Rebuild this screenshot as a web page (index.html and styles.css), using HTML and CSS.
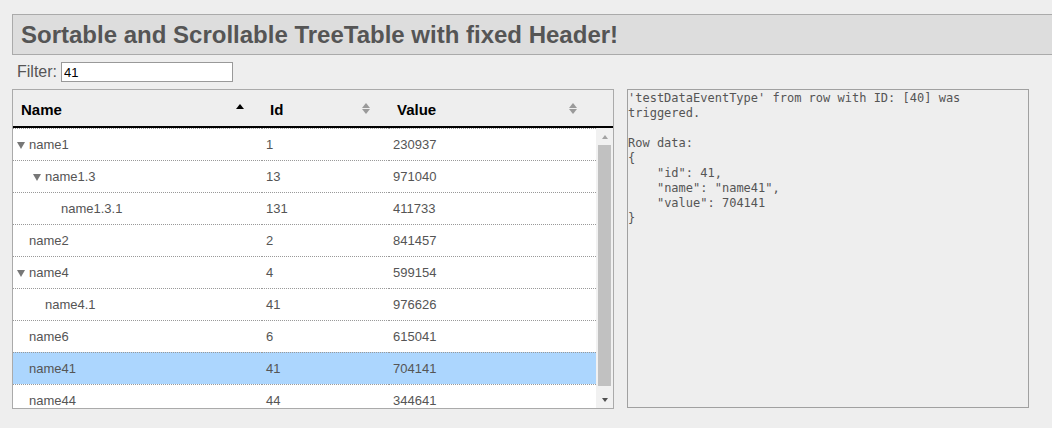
FILE: index.html
```html
<!DOCTYPE html>
<html>
<head>
<meta charset="utf-8">
<link rel="stylesheet" href="styles.css">
</head>
<body>
<div class="page">
  <h1 class="title">Sortable and Scrollable TreeTable with fixed Header!</h1>
  <div class="filter">
    <label class="filter-label" for="f">Filter:</label>
    <input id="f" class="filter-input" type="text" value="41">
  </div>
  <div class="main">
    <div class="tree-table">
      <div class="thead">
        <div class="th"><span>Name</span><span class="sort sort-asc"></span></div>
        <div class="th"><span>Id</span><span class="sort sort-both"></span></div>
        <div class="th"><span>Value</span><span class="sort sort-both"></span></div>
      </div>
      <div class="tbody">
        <div class="rows">
          <div class="tr"><div class="td name lvl0"><span class="tog open"></span>name1</div><div class="td">1</div><div class="td">230937</div></div>
          <div class="tr"><div class="td name lvl1"><span class="tog open"></span>name1.3</div><div class="td">13</div><div class="td">971040</div></div>
          <div class="tr"><div class="td name lvl2"><span class="tog"></span>name1.3.1</div><div class="td">131</div><div class="td">411733</div></div>
          <div class="tr"><div class="td name lvl0"><span class="tog"></span>name2</div><div class="td">2</div><div class="td">841457</div></div>
          <div class="tr"><div class="td name lvl0"><span class="tog open"></span>name4</div><div class="td">4</div><div class="td">599154</div></div>
          <div class="tr"><div class="td name lvl1"><span class="tog"></span>name4.1</div><div class="td">41</div><div class="td">976626</div></div>
          <div class="tr"><div class="td name lvl0"><span class="tog"></span>name6</div><div class="td">6</div><div class="td">615041</div></div>
          <div class="tr selected"><div class="td name lvl0"><span class="tog"></span>name41</div><div class="td">41</div><div class="td">704141</div></div>
          <div class="tr"><div class="td name lvl0"><span class="tog"></span>name44</div><div class="td">44</div><div class="td">344641</div></div>
        </div>
        <div class="scrollbar">
          <div class="sb-btn"><span class="arrow-up"></span></div>
          <div class="sb-thumb"></div>
          <div class="sb-track"></div>
          <div class="sb-btn"><span class="arrow-down"></span></div>
        </div>
      </div>
    </div>
    <div class="event-panel"><pre class="event-text">'testDataEventType' from row with ID: [40] was triggered.

Row data:
{
    "id": 41,
    "name": "name41",
    "value": 704141
}</pre></div>
  </div>
</div>
</body>
</html>
```

FILE: styles.css
```css
html, body {
  margin: 0;
  padding: 0;
  background: #eeeeee;
  overflow: hidden;
}

body {
  font-family: "Liberation Sans", Arial, sans-serif;
  color: #555555;
}

.page {
  padding: 14px 0 0 12px;
}

.title {
  margin: 0;
  height: 39px;
  line-height: 39px;
  padding-left: 8px;
  border: 1px solid #aaaaaa;
  border-right: none;
  background: #dddddd;
  font-size: 24px;
  font-weight: bold;
  color: #555555;
  white-space: nowrap;
}

.filter {
  display: flex;
  align-items: center;
  margin-top: 7px;
  padding-left: 5px;
  height: 20px;
}

.filter-label {
  font-size: 16px;
  color: #555555;
  margin-right: 4px;
}

.filter-input {
  box-sizing: border-box;
  width: 172px;
  height: 20px;
  margin: 0;
  padding: 0 2px;
  border: 1px solid #999999;
  background: #ffffff;
  font-family: "Liberation Sans", Arial, sans-serif;
  font-size: 13px;
  color: #000000;
  outline: none;
}

.main {
  display: flex;
  align-items: flex-start;
  gap: 13px;
  margin-top: 7px;
}

.tree-table {
  box-sizing: border-box;
  width: 602px;
  height: 320px;
  border: 1px solid #aaaaaa;
  display: flex;
  flex-direction: column;
  background: #ffffff;
}

.thead {
  display: grid;
  grid-template-columns: 249px 127px 207px 17px;
  height: 36px;
  border-bottom: 2px solid #000000;
  background: #eeeeee;
}

.th {
  display: flex;
  align-items: center;
  justify-content: space-between;
  padding: 2px 18px 0 8px;
  font-size: 15px;
  font-weight: bold;
  color: #000000;
}

.sort {
  display: block;
  width: 9px;
  position: relative;
}

.sort-asc {
  margin-top: -6px;
  border-left: 4.5px solid transparent;
  border-right: 4.5px solid transparent;
  border-bottom: 5px solid #000000;
  width: 0;
  height: 0;
}

.sort-both {
  height: 11px;
  margin-top: -1px;
}

.sort-both::before,
.sort-both::after {
  content: "";
  position: absolute;
  left: 0;
  width: 0;
  height: 0;
  border-left: 4.5px solid transparent;
  border-right: 4.5px solid transparent;
}

.sort-both::before {
  top: 0;
  border-bottom: 5px solid #9a9a9a;
}

.sort-both::after {
  bottom: 0;
  border-top: 5px solid #9a9a9a;
}

.tbody {
  flex: 1;
  display: flex;
  overflow: hidden;
}

.rows {
  flex: 1;
  overflow: hidden;
}

.tr {
  display: grid;
  grid-template-columns: 249px 127px 207px;
  height: 32px;
  background: #ffffff;
}

.tr.selected {
  background: #acd6fe;
}

.td {
  display: flex;
  align-items: center;
  box-sizing: border-box;
  height: 32px;
  padding-left: 4px;
  border-top: 1px dotted #999999;
  font-size: 13px;
  color: #555555;
  white-space: nowrap;
}

.name.lvl1 { padding-left: 20px; }
.name.lvl2 { padding-left: 36px; }

.tog {
  display: inline-block;
  width: 12px;
  height: 6px;
  flex: none;
}

.tog.open {
  width: 0;
  height: 0;
  margin-right: 4px;
  border-left: 4px solid transparent;
  border-right: 4px solid transparent;
  border-top: 7px solid #777777;
  margin-top: 1px;
}

.scrollbar {
  width: 17px;
  flex: none;
  display: flex;
  flex-direction: column;
  background: #f1f1f1;
}

.sb-btn {
  height: 17px;
  display: flex;
  align-items: center;
  justify-content: center;
  flex: none;
}

.arrow-up {
  width: 0;
  height: 0;
  border-left: 3.5px solid transparent;
  border-right: 3.5px solid transparent;
  border-bottom: 4px solid #a3a3a3;
}

.arrow-down {
  width: 0;
  height: 0;
  border-left: 3.5px solid transparent;
  border-right: 3.5px solid transparent;
  border-top: 4px solid #505050;
}

.sb-thumb {
  height: 241px;
  margin: 0 2px;
  background: #c1c1c1;
  flex: none;
}

.sb-track {
  flex: 1;
}

.event-panel {
  box-sizing: border-box;
  width: 402px;
  height: 319px;
  border: 1px solid #a0a0a0;
  background: #eeeeee;
}

.event-text {
  margin: 0;
  padding: 1px 0 0 0;
  font-family: "DejaVu Sans Mono", "Liberation Mono", monospace;
  font-size: 12px;
  line-height: 15px;
  color: #555555;
  white-space: pre-wrap;
}
```
